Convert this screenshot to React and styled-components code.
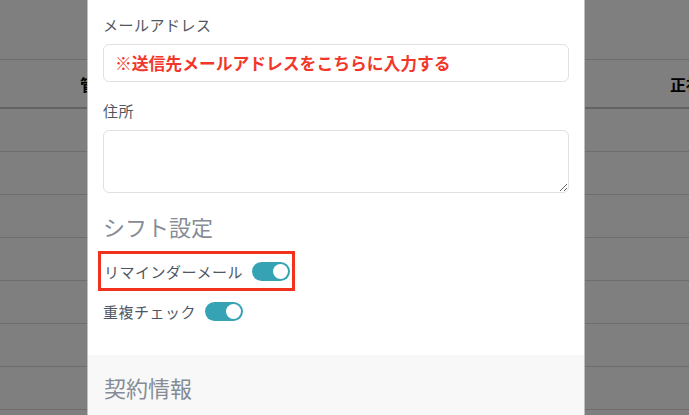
import React from "react";
import styled, { createGlobalStyle } from "styled-components";

const GlobalStyle = createGlobalStyle`
  html, body {
    margin: 0;
    height: 100%;
    overflow: hidden;
    background: #fff;
    font-family: "Noto Sans CJK JP", "Noto Sans", sans-serif;
  }
`;

const Page = styled.div`
  width: 689px;
  height: 415px;
  overflow: hidden;
`;

const TopRow = styled.div`
  height: 59px;
  border-bottom: 1px solid #dadada;
`;

const HeadRow = styled.div`
  height: 47px;
  border-bottom: 2px solid #c4c4c4;
  display: flex;
  align-items: center;
  justify-content: space-between;
  padding-left: 80px;
  font-size: 16px;
  font-weight: 700;
  color: #000;
  white-space: nowrap;
`;

const HeadCell = styled.span`
  width: ${(p) => p.$w}px;
  overflow: hidden;
`;

const BodyRow = styled.div`
  height: 42px;
  border-bottom: 1px solid #dadada;
`;

const Overlay = styled.div`
  position: fixed;
  inset: 0;
  background: rgba(0, 0, 0, 0.5);
  display: flex;
  align-items: flex-start;
  padding-left: 87px;
`;

const Modal = styled.div`
  width: 498px;
  box-sizing: border-box;
  background: #fff;
  border-left: 1px solid rgba(0, 0, 0, 0.25);
  border-right: 1px solid rgba(0, 0, 0, 0.25);
`;

const Body = styled.div`
  padding: 14px 15px 27px;
`;

const Label = styled.div`
  font-size: 15px;
  line-height: 22px;
  letter-spacing: 0.5px;
  color: #4f5661;
  margin: ${(p) => (p.$first ? "0" : "18px")} 0 8px;
`;

const Input = styled.div`
  height: 38px;
  box-sizing: border-box;
  border: 1px solid #e0e0e5;
  border-radius: 6px;
  padding: 0 11px;
  display: flex;
  align-items: center;
  font-size: 16.8px;
  font-weight: 700;
  color: #f2372a;
  white-space: nowrap;
`;

const TextArea = styled.textarea`
  display: block;
  width: 100%;
  height: 63px;
  margin-top: 1px;
  box-sizing: border-box;
  border: 1px solid #e0e0e5;
  border-radius: 6px;
  outline: none;
  resize: vertical;
  font-family: inherit;
`;

const Heading = styled.div`
  font-size: 22px;
  line-height: 30px;
  color: #858c95;
`;

const SectionHeading = styled(Heading)`
  margin: 18px 0 10px;
`;

const Highlight = styled.div`
  width: 197px;
  box-sizing: border-box;
  margin-left: -5px;
  border: 3px solid #f0321f;
  padding-left: 3px;
`;

const SwitchRow = styled.div`
  height: 34px;
  display: flex;
  align-items: center;
  gap: 9px;
  font-size: 15px;
  letter-spacing: 0.5px;
  color: #4f5661;
  margin-top: ${(p) => p.$mt || 0}px;
`;

const Toggle = styled.span`
  width: 38px;
  height: 19px;
  border-radius: 10px;
  background: #36a3b4;
  position: relative;
  flex-shrink: 0;

  &::after {
    content: "";
    position: absolute;
    top: 2px;
    right: 2px;
    width: 15px;
    height: 15px;
    border-radius: 50%;
    background: #fff;
  }
`;

const Footer = styled.div`
  background: #f8f8f8;
  padding: 17px 16px 40px;
`;

export default function App() {
  return (
    <>
      <GlobalStyle />
      <Page>
        <TopRow />
        <HeadRow>
          <HeadCell $w={60}>管理者</HeadCell>
          <HeadCell $w={19}>正社員</HeadCell>
        </HeadRow>
        {Array.from({ length: 8 }).map((_, i) => (
          <BodyRow key={i} />
        ))}
      </Page>
      <Overlay>
        <Modal>
          <Body>
            <Label $first>メールアドレス</Label>
            <Input>※送信先メールアドレスをこちらに入力する</Input>
            <Label>住所</Label>
            <TextArea />
            <SectionHeading>シフト設定</SectionHeading>
            <Highlight>
              <SwitchRow>
                リマインダーメール
                <Toggle />
              </SwitchRow>
            </Highlight>
            <SwitchRow $mt={3}>
              重複チェック
              <Toggle />
            </SwitchRow>
          </Body>
          <Footer>
            <Heading>契約情報</Heading>
          </Footer>
        </Modal>
      </Overlay>
    </>
  );
}
